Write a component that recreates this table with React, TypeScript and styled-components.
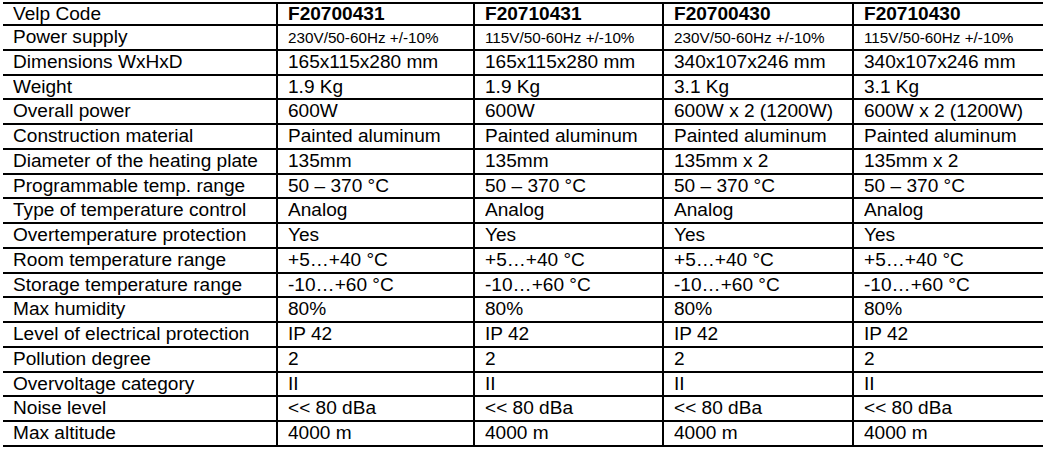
import React from 'react'
import styled, { createGlobalStyle } from 'styled-components'

const GlobalStyle = createGlobalStyle`
  html, body {
    margin: 0;
    padding: 0;
    background: #ffffff;
  }
  body {
    font-family: "Liberation Sans", Arial, sans-serif;
    color: #000000;
  }
`

const Page = styled.div`
  padding: 2px 3px 0 3px;
`

const SpecTable = styled.div`
  display: grid;
  width: 1040px;
  grid-template-columns: 273px 197px 189px 190px 191px;
  grid-template-rows: 22px repeat(17, 24.75px);
  border-top: 2px solid #000;
`

const Cell = styled.div<{ $first?: boolean }>`
  box-sizing: border-box;
  display: flex;
  align-items: center;
  padding-left: 10px;
  border-bottom: 2px solid #000;
  border-left: ${({ $first }) => ($first ? 'none' : '2px solid #000')};
  overflow: visible;
  white-space: nowrap;
`

const CellText = styled.span<{ $small?: boolean; $bold?: boolean }>`
  display: inline-block;
  font-size: ${({ $small }) => ($small ? '14px' : '17.5px')};
  font-weight: ${({ $bold }) => ($bold ? 700 : 400)};
  transform: scaleX(1.09);
  transform-origin: left center;
  line-height: 1;
  padding-top: 1px;
`

type Row = {
    label: string
    values: string[]
    small?: boolean
    bold?: boolean
}

const same = (v: string) => [v, v, v, v]

const rows: Row[] = [
    { label: 'Velp Code', values: ['F20700431', 'F20710431', 'F20700430', 'F20710430'], bold: true },
    {
        label: 'Power supply',
        values: ['230V/50-60Hz +/-10%', '115V/50-60Hz +/-10%', '230V/50-60Hz +/-10%', '115V/50-60Hz +/-10%'],
        small: true,
    },
    { label: 'Dimensions WxHxD', values: ['165x115x280 mm', '165x115x280 mm', '340x107x246 mm', '340x107x246 mm'] },
    { label: 'Weight', values: ['1.9 Kg', '1.9 Kg', '3.1 Kg', '3.1 Kg'] },
    { label: 'Overall power', values: ['600W', '600W', '600W x 2 (1200W)', '600W x 2 (1200W)'] },
    { label: 'Construction material', values: same('Painted aluminum') },
    { label: 'Diameter of the heating plate', values: ['135mm', '135mm', '135mm x 2', '135mm x 2'] },
    { label: 'Programmable temp. range', values: same('50 – 370 °C') },
    { label: 'Type of temperature control', values: same('Analog') },
    { label: 'Overtemperature protection', values: same('Yes') },
    { label: 'Room temperature range', values: same('+5…+40 °C') },
    { label: 'Storage temperature range', values: same('-10…+60 °C') },
    { label: 'Max humidity', values: same('80%') },
    { label: 'Level of electrical protection', values: same('IP 42') },
    { label: 'Pollution degree', values: same('2') },
    { label: 'Overvoltage category', values: same('II') },
    { label: 'Noise level', values: same('<< 80 dBa') },
    { label: 'Max altitude', values: same('4000 m') },
]

const App = () => {
    return (
        <Page>
            <GlobalStyle />
            <SpecTable>
                {rows.map((row) => (
                    <React.Fragment key={row.label}>
                        <Cell $first>
                            <CellText>{row.label}</CellText>
                        </Cell>
                        {row.values.map((value, i) => (
                            <Cell key={i}>
                                <CellText $small={row.small} $bold={row.bold}>
                                    {value}
                                </CellText>
                            </Cell>
                        ))}
                    </React.Fragment>
                ))}
            </SpecTable>
        </Page>
    )
}

export default App
